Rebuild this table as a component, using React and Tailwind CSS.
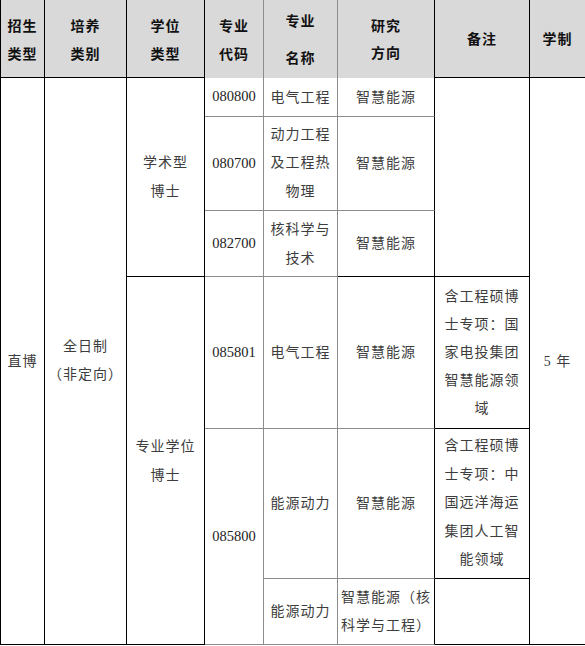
import React from "react";

function Cell({ cls, children }) {
  return (
    <div className={`flex flex-col items-center justify-center text-center box-border ${cls}`}>
      {children}
    </div>
  );
}

function Lines({ items, lh = "leading-[28px]" }) {
  return (
    <div className={lh}>
      {items.map((t, i) => (
        <div key={i}>{t}</div>
      ))}
    </div>
  );
}

export default function App() {
  const H = "bg-[#d9d9d9] font-bold text-[#111] text-[14px] tracking-[1px] font-['Noto_Sans_CJK_SC',sans-serif]";
  return (
    <div className="w-[585px] h-[646px] bg-white overflow-hidden">
      <div className="grid grid-cols-[44px_82px_78px_59px_74px_97px_95px_55px] grid-rows-[78px_39px_94px_66px_152px_150px_66px] border-l border-black text-[14px] text-[#3d3d3d] tracking-[1px] font-['Liberation_Serif','Noto_Sans_CJK_SC',serif]">
        {/* Header */}
        <Cell cls={`col-start-1 row-start-1 border-r border-b border-black ${H}`}>
          <Lines items={["招生", "类型"]} />
        </Cell>
        <Cell cls={`col-start-2 row-start-1 border-r border-b border-black ${H}`}>
          <Lines items={["培养", "类别"]} />
        </Cell>
        <Cell cls={`col-start-3 row-start-1 border-r border-b border-black ${H}`}>
          <Lines items={["学位", "类型"]} />
        </Cell>
        <Cell cls={`col-start-4 row-start-1 border-r border-[#8c8c8c] ${H}`}>
          <Lines items={["专业", "代码"]} />
        </Cell>
        <Cell cls={`col-start-5 row-start-1 border-r border-[#8c8c8c] ${H}`}>
          <Lines items={["专业", "名称"]} lh="leading-[37px]" />
        </Cell>
        <Cell cls={`col-start-6 row-start-1 border-r border-black ${H}`}>
          <Lines items={["研究", "方向"]} lh="leading-[27px]" />
        </Cell>
        <Cell cls={`col-start-7 row-start-1 border-r border-b border-black ${H}`}>
          <div>备注</div>
        </Cell>
        <Cell cls={`col-start-8 row-start-1 border-b border-black ${H}`}>
          <div>学制</div>
        </Cell>

        {/* Column 1-3 merged */}
        <Cell cls="col-start-1 row-start-2 row-span-6 border-r border-b border-black">
          <div>直博</div>
        </Cell>
        <Cell cls="col-start-2 row-start-2 row-span-6 border-r border-b border-black">
          <Lines items={["全日制", "（非定向）"]} />
        </Cell>
        <Cell cls="col-start-3 row-start-2 row-span-3 border-r border-b border-black">
          <Lines items={["学术型", "博士"]} lh="leading-[29px]" />
        </Cell>
        <Cell cls="col-start-3 row-start-5 row-span-3 border-r border-b border-black">
          <Lines items={["专业学位", "博士"]} lh="leading-[29px]" />
        </Cell>

        {/* Row 2 */}
        <Cell cls="col-start-4 row-start-2 border-r border-b border-[#8c8c8c] tracking-normal text-[14.5px] text-[#222]">
          <div>080800</div>
        </Cell>
        <Cell cls="col-start-5 row-start-2 border-r border-b border-[#8c8c8c]">
          <div>电气工程</div>
        </Cell>
        <Cell cls="col-start-6 row-start-2 border-r border-r-black border-b border-b-[#8c8c8c]">
          <div>智慧能源</div>
        </Cell>
        <Cell cls="col-start-7 row-start-2 row-span-3 border-r border-b border-black">
          <div></div>
        </Cell>
        <Cell cls="col-start-8 row-start-2 row-span-6 border-b border-black">
          <div>5 年</div>
        </Cell>

        {/* Row 3 */}
        <Cell cls="col-start-4 row-start-3 border-r border-b border-[#8c8c8c] tracking-normal text-[14.5px] text-[#222]">
          <div>080700</div>
        </Cell>
        <Cell cls="col-start-5 row-start-3 border-r border-b border-[#8c8c8c]">
          <Lines items={["动力工程", "及工程热", "物理"]} lh="leading-[28.5px]" />
        </Cell>
        <Cell cls="col-start-6 row-start-3 border-r border-r-black border-b border-b-[#8c8c8c]">
          <div>智慧能源</div>
        </Cell>

        {/* Row 4 */}
        <Cell cls="col-start-4 row-start-4 border-r border-b border-[#8c8c8c] tracking-normal text-[14.5px] text-[#222]">
          <div>082700</div>
        </Cell>
        <Cell cls="col-start-5 row-start-4 border-r border-b border-[#8c8c8c]">
          <Lines items={["核科学与", "技术"]} lh="leading-[29px]" />
        </Cell>
        <Cell cls="col-start-6 row-start-4 border-r border-b border-black">
          <div>智慧能源</div>
        </Cell>

        {/* Row 5 */}
        <Cell cls="col-start-4 row-start-5 border-r border-b border-[#8c8c8c] tracking-normal text-[14.5px] text-[#222]">
          <div>085801</div>
        </Cell>
        <Cell cls="col-start-5 row-start-5 border-r border-b border-[#8c8c8c]">
          <div>电气工程</div>
        </Cell>
        <Cell cls="col-start-6 row-start-5 border-r border-r-black border-b border-b-[#8c8c8c]">
          <div>智慧能源</div>
        </Cell>
        <Cell cls="col-start-7 row-start-5 border-r border-b border-black">
          <Lines items={["含工程硕博", "士专项：国", "家电投集团", "智慧能源领", "域"]} />
        </Cell>

        {/* Row 6-7 */}
        <Cell cls="col-start-4 row-start-6 row-span-2 border-r border-b border-[#8c8c8c] tracking-normal text-[14.5px] text-[#222]">
          <div>085800</div>
        </Cell>
        <Cell cls="col-start-5 row-start-6 border-r border-b border-[#8c8c8c]">
          <div>能源动力</div>
        </Cell>
        <Cell cls="col-start-6 row-start-6 border-r border-r-black border-b border-b-[#8c8c8c]">
          <div>智慧能源</div>
        </Cell>
        <Cell cls="col-start-7 row-start-6 border-r border-b border-black">
          <Lines items={["含工程硕博", "士专项：中", "国远洋海运", "集团人工智", "能领域"]} lh="leading-[28.5px]" />
        </Cell>

        <Cell cls="col-start-5 row-start-7 border-r border-b border-[#8c8c8c]">
          <div>能源动力</div>
        </Cell>
        <Cell cls="col-start-6 row-start-7 border-r border-r-black border-b border-b-[#8c8c8c]">
          <Lines items={["智慧能源（核", "科学与工程）"]} />
        </Cell>
        <Cell cls="col-start-7 row-start-7 border-r border-b border-black">
          <div></div>
        </Cell>
      </div>
    </div>
  );
}
